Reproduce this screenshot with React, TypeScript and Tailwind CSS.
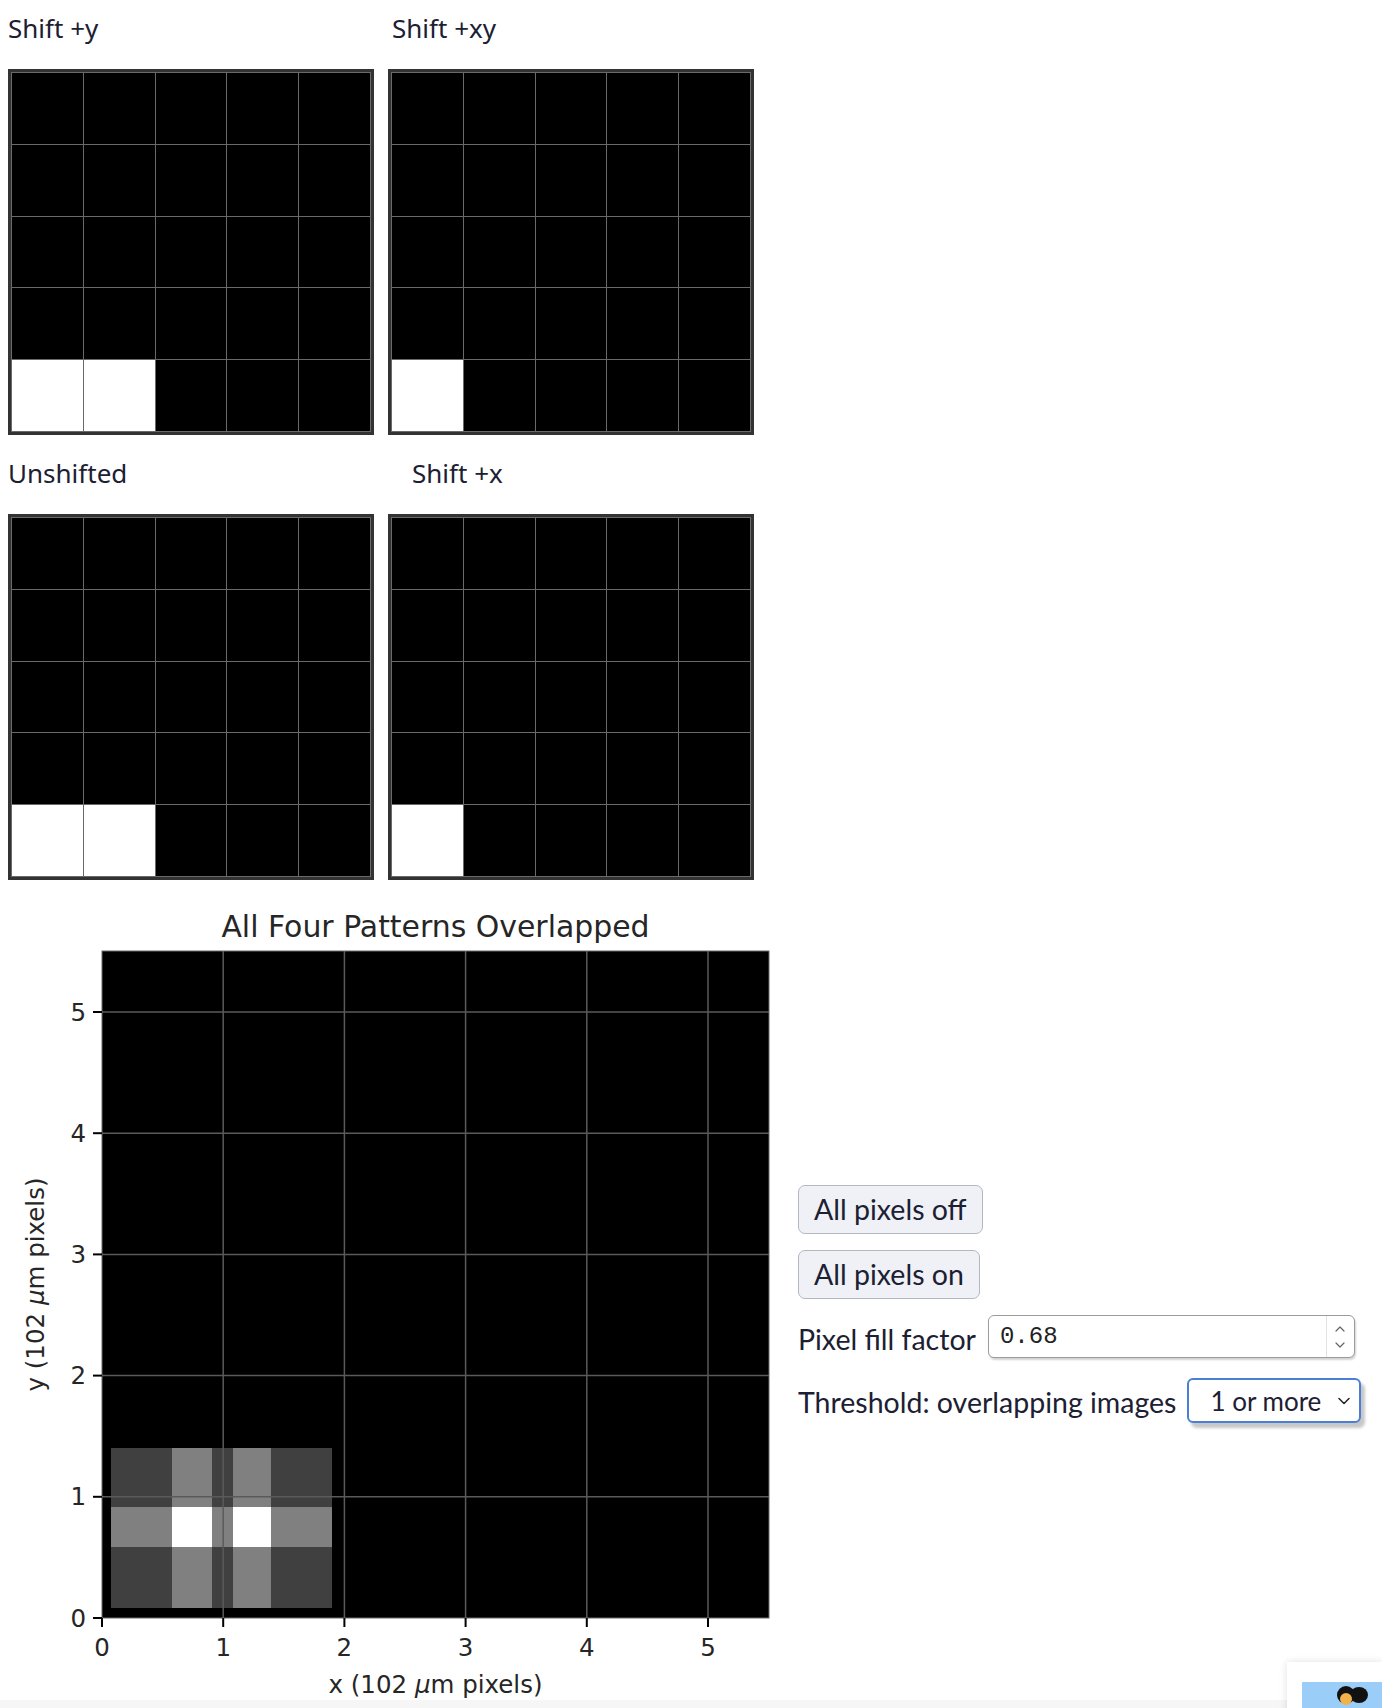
import { ChevronDown, ChevronUp } from "lucide-react";

const PLOT_L = 102
const PLOT_T = 71
const PLOT_S = 667
const UNIT = 121.2
const PLOT_B = PLOT_T + PLOT_S

const GRAY_D = "#404040"
const GRAY_M = "#808080"

const cols = [111, 172, 212, 233, 271, 332]
const rows = [568, 627, 667, 728]
const patch = [
  [GRAY_D, GRAY_M, GRAY_D, GRAY_M, GRAY_D],
  [GRAY_M, "#ffffff", GRAY_M, "#ffffff", GRAY_M],
  [GRAY_D, GRAY_M, GRAY_D, GRAY_M, GRAY_D],
]

function PixelGrid({ on }: { on: number[] }) {
  return (
    <div className="grid h-[366px] w-[366px] grid-cols-5 grid-rows-5 gap-px border-[3px] border-[#333] bg-[#6a6a6a] p-px">
      {Array.from({ length: 25 }, (_, i) => (
        <div key={i} className={on.includes(i) ? "bg-white" : "bg-black"} />
      ))}
    </div>
  )
}

function Title({ children, className }: { children: string; className?: string }) {
  return (
    <div className={"font-['Noto_Sans',sans-serif] text-[26px] leading-[36px] text-[#1c2033] " + (className ?? "")}>
      {children}
    </div>
  )
}

function OverlapChart() {
  const ticks = [0, 1, 2, 3, 4, 5]
  return (
    <svg width="780" height="820" viewBox="0 0 780 820" fontFamily="DejaVu Sans, sans-serif" fill="#262626">
      <text x="435.5" y="57" fontSize="29.9" textAnchor="middle">All Four Patterns Overlapped</text>
      <rect x={PLOT_L} y={PLOT_T} width={PLOT_S} height={PLOT_S} fill="#000" />
      {patch.map((r, ri) =>
        r.map((c, ci) => (
          <rect
            key={ri + "-" + ci}
            x={cols[ci]}
            y={rows[ri]}
            width={cols[ci + 1] - cols[ci]}
            height={rows[ri + 1] - rows[ri]}
            fill={c}
          />
        ))
      )}
      {ticks.slice(1).map((t) => (
        <g key={t} stroke="#5a5a5a" strokeWidth="1.5">
          <line x1={PLOT_L + t * UNIT} y1={PLOT_T} x2={PLOT_L + t * UNIT} y2={PLOT_B} />
          <line x1={PLOT_L} y1={PLOT_B - t * UNIT} x2={PLOT_L + PLOT_S} y2={PLOT_B - t * UNIT} />
        </g>
      ))}
      <rect x={PLOT_L} y={PLOT_T} width={PLOT_S} height={PLOT_S} fill="none" stroke="#6b6b6b" strokeWidth="1" />
      {ticks.map((t) => (
        <g key={t}>
          <line x1={PLOT_L - 9} y1={PLOT_B - t * UNIT} x2={PLOT_L} y2={PLOT_B - t * UNIT} stroke="#000" strokeWidth="2" />
          <text x="86" y={PLOT_B - t * UNIT + 8.5} fontSize="24.5" textAnchor="end">{t}</text>
          <line x1={PLOT_L + t * UNIT} y1={PLOT_B} x2={PLOT_L + t * UNIT} y2={PLOT_B + 9} stroke="#000" strokeWidth="2" />
          <text x={PLOT_L + t * UNIT} y="776" fontSize="24.5" textAnchor="middle">{t}</text>
        </g>
      ))}
      <text x="435.5" y="813" fontSize="24.5" textAnchor="middle">
        x (102 <tspan fontStyle="italic">μ</tspan>m pixels)
      </text>
      <text x="44" y="404.5" fontSize="24.5" textAnchor="middle" transform="rotate(-90 44 404.5)">
        y (102 <tspan fontStyle="italic">μ</tspan>m pixels)
      </text>
    </svg>
  )
}

function Controls() {
  const label = "font-['Liberation_Sans_Narrow',Lato,sans-serif] text-[28.5px] text-[#1c2033] whitespace-nowrap"
  return (
    <div className="ml-[18px] mt-[305px] flex flex-col items-start">
      <button className={label + " h-[49px] rounded-[7px] border border-[#b3b7c0] bg-[#eff1f6] px-[15px] leading-none"}>
        All pixels off
      </button>
      <button className={label + " mt-4 h-[49px] rounded-[7px] border border-[#b3b7c0] bg-[#eff1f6] px-[15px] leading-none"}>
        All pixels on
      </button>
      <div className="mt-4 flex items-center gap-3">
        <span className={label + " pt-1.5 leading-none"}>Pixel fill factor</span>
        <div className="flex h-[43px] w-[367px] rounded-[6px] border border-[#9c9c9c] bg-white shadow-[1px_2px_2px_rgba(0,0,0,0.18)]">
          <input
            readOnly
            value="0.68"
            className="min-w-0 flex-1 bg-transparent pl-[11px] font-['Liberation_Mono',monospace] text-[24px] text-[#222] outline-none"
          />
          <div className="flex w-[28px] flex-col items-center justify-center border-l border-[#e2e2e2] text-[#666]">
            <ChevronUp size={16} strokeWidth={1.8} />
            <ChevronDown size={16} strokeWidth={1.8} />
          </div>
        </div>
      </div>
      <div className="mt-[20px] flex items-center gap-[11px]">
        <span className={label + " pt-1 leading-none"}>Threshold: overlapping images</span>
        <div className="flex h-[45px] w-[174px] items-center justify-between rounded-[6px] border-2 border-[#4a7fd6] bg-white pl-[21px] pr-[5px] shadow-[4px_5px_3px_rgba(0,0,0,0.22)]">
          <span className="whitespace-nowrap font-['Liberation_Sans_Narrow',Lato,sans-serif] text-[26px] leading-none text-[#1c2033]">1 or more</span>
          <ChevronDown size={20} strokeWidth={1.8} className="text-[#222]" />
        </div>
      </div>
    </div>
  )
}

export default function App() {
  return (
    <div className="relative min-h-[1708px] overflow-hidden bg-white">
      <div className="h-[1700px] pl-2">
        <div className="flex gap-[14px] pt-[10px]">
          <div>
            <Title>Shift +y</Title>
            <div className="mt-[23px]"><PixelGrid on={[20, 21]} /></div>
          </div>
          <div>
            <Title className="pl-1">Shift +xy</Title>
            <div className="mt-[23px]"><PixelGrid on={[20]} /></div>
          </div>
        </div>
        <div className="mt-5 flex gap-[14px]">
          <div>
            <Title>Unshifted</Title>
            <div className="mt-[23px]"><PixelGrid on={[20, 21]} /></div>
          </div>
          <div>
            <Title className="pl-6">Shift +x</Title>
            <div className="mt-[23px]"><PixelGrid on={[20]} /></div>
          </div>
        </div>
        <div className="-ml-2 flex">
          <OverlapChart />
          <Controls />
        </div>
      </div>
      <div className="h-2 bg-[#f6f6f7]" />
      <div className="absolute right-0 top-[1662px] h-[60px] w-[95px] bg-white pl-[15px] pt-[18px] shadow-[0_0_8px_rgba(0,0,0,0.12)]">
        <div className="h-full w-full bg-[#9acdf7]">
          <svg width="44" height="30" viewBox="0 0 44 30" className="ml-[30px] mt-[2px]">
            <ellipse cx="14" cy="13" rx="9" ry="9" fill="#111" />
            <ellipse cx="27" cy="13" rx="9" ry="8" fill="#111" />
            <ellipse cx="14" cy="17" rx="6" ry="6" fill="#f0b24b" />
          </svg>
        </div>
      </div>
    </div>
  )
}
